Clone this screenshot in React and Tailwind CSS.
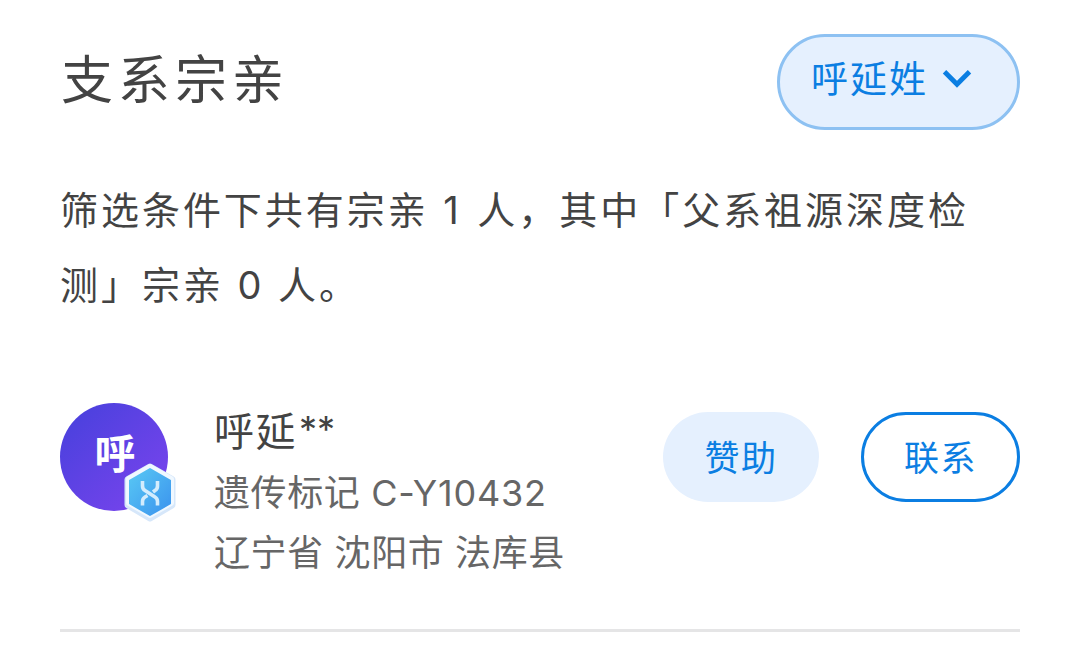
import { ChevronDown } from 'lucide-react';

const MEMBERS = [
    { id: 1, initial: '呼', name: '呼延', mask: '**', marker: '遗传标记', haplogroup: 'C-Y10432', region: '辽宁省 沈阳市 法库县' },
];

function HexBadge() {
    return (
        <svg viewBox="0 0 56 62" className="absolute left-[62px] top-[59px] h-[62px] w-[56px]">
            <defs>
                <linearGradient id="hex" x1="0" y1="0" x2="1" y2="1">
                    <stop offset="0" stopColor="#58c8f4" />
                    <stop offset="1" stopColor="#3b93ee" />
                </linearGradient>
            </defs>
            <path d="M28 5 L50 17.5 V43 L28 56 L6 43 V17.5 Z" fill="#d6e7fa" stroke="#d6e7fa" strokeWidth="7" strokeLinejoin="round" />
            <path d="M28 5 L49 17 V41 L28 53 L7 41 V17 Z" fill="#f0f8ff" stroke="#f0f8ff" strokeWidth="6" strokeLinejoin="round" />
            <path d="M28 7 L48 18.5 V41.5 L28 53 L8 41.5 V18.5 Z" fill="url(#hex)" stroke="url(#hex)" strokeWidth="2" strokeLinejoin="round" />
            <g fill="none" stroke="#d3ecfd" strokeWidth="3.6" strokeLinejoin="round">
                <path d="M20.500 19 V24 Q20.500 27 23 28.500 L33 35 Q35.500 36.500 35.500 39.500 V43.500" />
                <path d="M35.500 19 V24 Q35.500 27 33 28.500 L31 30" />
                <path d="M25.500 33.500 L23 35 Q20.500 36.500 20.500 39.500 V43.500" />
            </g>
        </svg>
    );
}

function MemberRow({ member }) {
    return (
        <div className="flex h-[229px] border-b-[3px] border-[#e5e5e6]">
            <div className="relative h-[108px] w-[108px] shrink-0 rounded-full bg-linear-to-br from-[#4440dc] to-[#7c43ee]">
                <div className="flex h-[104px] items-center justify-center pl-0.5 text-[41px] font-bold text-white">
                    {member.initial}
                </div>
                <HexBadge />
            </div>
            <div className="ml-[46px] -mt-px whitespace-nowrap text-[36px] leading-[60px] tracking-[0.6px] text-[#666]">
                <p className="flex text-[40px] tracking-[1.500px] text-[#434343]">
                    {member.name}
                    <span className="-mt-[3px] ml-0.5 text-[36px] tracking-normal">{member.mask}</span>
                </p>
                <p className="mt-px">
                    {member.marker} <span className="tracking-[0.8px]">{member.haplogroup}</span>
                </p>
                <p>{member.region}</p>
            </div>
            <div className="ml-auto mt-[9px] flex gap-[42px] text-[35px] tracking-[1.500px] text-[#0b7ee2]">
                <button className="h-[90px] w-[156px] rounded-full bg-[#e5f0fe] pt-0.5">赞助</button>
                <button className="h-[90px] w-[159px] rounded-full border-[3px] border-[#0b7ee2] pt-0.5">联系</button>
            </div>
        </div>
    );
}

export default function App() {
    return (
        <div className="h-[660px] w-[1080px] overflow-hidden bg-white px-[60px] pt-[34px] font-['Inter','Noto_Sans_CJK_SC',sans-serif] text-[#434343]">
            <header className="flex h-[96px] justify-between">
                <h1 className="pl-px text-[52px] leading-[94px] tracking-[5px]">支系宗亲</h1>
                <button className="flex h-[96px] w-[243px] items-center rounded-full border-[3px] border-[#8dc1f2] bg-[#e5f0fe] pb-1 pl-[31px] text-[37px] tracking-[2px] text-[#0b7ee2]">
                    呼延姓
                    <ChevronDown size={50} strokeWidth={2.3} className="-mt-1 ml-1" strokeLinecap="butt" strokeLinejoin="miter" />
                </button>
            </header>

            <div className="mt-[43px] whitespace-nowrap text-[38px] leading-[75px] tracking-[2.960px]">
                <p>筛选条件下共有宗亲 <span className="mr-[2px] pl-px">1</span> 人，其中「父系祖源深度检</p>
                <p>测」宗亲 0 人。</p>
            </div>

            <div className="mt-[80px]">
                {MEMBERS.map((m) => <MemberRow key={m.id} member={m} />)}
            </div>
        </div>
    );
}
